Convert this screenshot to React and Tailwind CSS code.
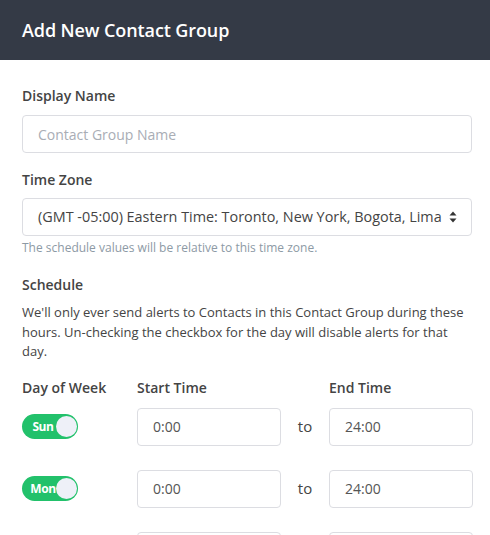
import React from "react";

function Toggle({ label }) {
  return (
    <div className="relative w-[56px] h-[25px] rounded-full bg-[#22c16b] flex items-center">
      <span className="absolute right-[1.5px] top-[2px] w-[21px] h-[21px] rounded-full bg-[#eef0f8]" />
      <span className="relative ml-[5px] w-[32px] text-center text-[12px] font-bold text-white leading-none tracking-[-0.4px]">{label}</span>
    </div>
  );
}

function Row({ day }) {
  return (
    <div className="flex items-center h-[38px] mb-[24px]">
      <div className="w-[115px] shrink-0">
        <Toggle label={day} />
      </div>
      <div className="w-[144px] shrink-0 h-[38px] border border-[#dcdde2] rounded-[4px] flex items-center pl-[15px] text-[14px] text-[#555]">0:00</div>
      <div className="w-[48px] shrink-0 text-center text-[15px] text-[#444]">to</div>
      <div className="w-[144px] shrink-0 h-[38px] border border-[#dcdde2] rounded-[4px] flex items-center pl-[15px] text-[14px] text-[#555]">24:00</div>
    </div>
  );
}

export default function App() {
  return (
    <div className="w-[490px] h-[535px] overflow-hidden bg-white" style={{ fontFamily: '"Open Sans", "Noto Sans", sans-serif' }}>
      <div className="h-[60px] bg-[#343a46] flex items-center px-[22px]">
        <h1 className="text-white text-[18px] font-semibold tracking-[-0.1px]">Add New Contact Group</h1>
      </div>
      <div className="pl-[22px] pr-[18px] pt-[26px]">
        <div className="text-[14px] leading-[20px] font-semibold text-[#444]">Display Name</div>
        <div className="mt-[9px] h-[38px] w-[450px] border border-[#dcdde2] rounded-[4px] flex items-center pl-[15px] text-[14px] text-[#a9adb5]">
          Contact Group Name
        </div>
        <div className="mt-[17px] text-[14px] leading-[20px] font-semibold text-[#444]">Time Zone</div>
        <div className="mt-[8px] h-[38px] w-[450px] border border-[#dcdde2] rounded-[4px] flex items-center justify-between pl-[15px] pr-[14px] text-[14.4px] text-[#444]">
          <span>(GMT -05:00) Eastern Time: Toronto, New York, Bogota, Lima</span>
          <svg width="8" height="12" viewBox="0 0 8 12">
            <path d="M4 0.5 L7.5 4.5 H0.5 Z" fill="#333" />
            <path d="M4 11.5 L7.5 7.5 H0.5 Z" fill="#333" />
          </svg>
        </div>
        <div className="mt-[4px] text-[12px] leading-[16px] text-[#8d9aa5]">The schedule values will be relative to this time zone.</div>
        <div className="mt-[19px] text-[14px] leading-[20px] font-semibold text-[#444]">Schedule</div>
        <p className="mt-[8px] text-[13px] leading-[19.5px] text-[#444] w-[446px]">
          We'll only ever send alerts to Contacts in this Contact Group during these hours. Un-checking the checkbox for the day will disable alerts for that day.
        </p>
        <div className="mt-[16px] flex text-[14px] leading-[20px] font-semibold text-[#444]">
          <div className="w-[115px]">Day of Week</div>
          <div className="w-[192px]">Start Time</div>
          <div>End Time</div>
        </div>
        <div className="mt-[10px]">
          <Row day="Sun" />
          <Row day="Mon" />
          <Row day="Tue" />
        </div>
      </div>
    </div>
  );
}
